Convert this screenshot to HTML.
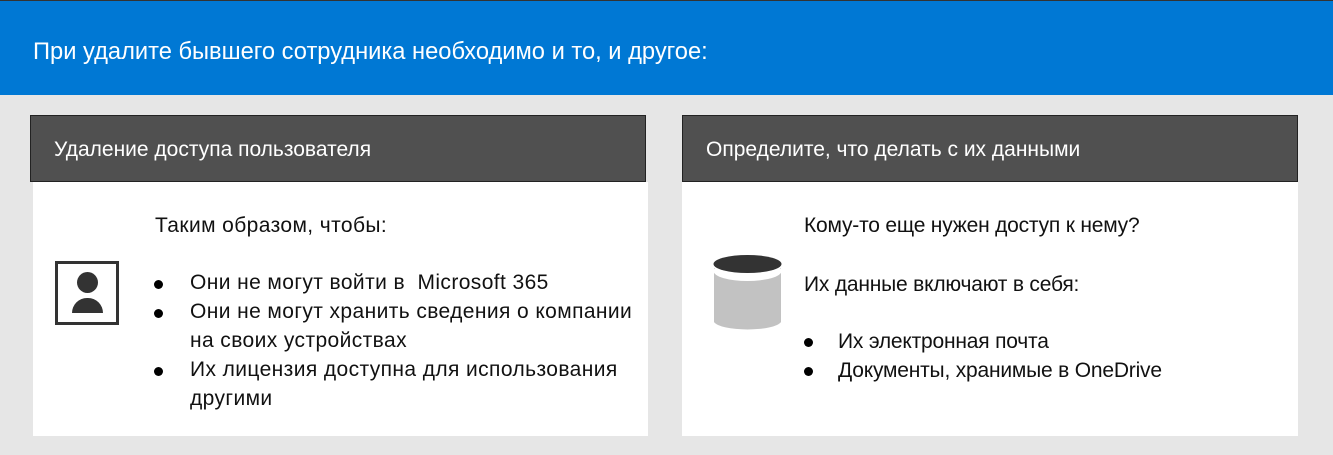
<!DOCTYPE html>
<html><head><meta charset="utf-8"><style>
*{margin:0;padding:0;box-sizing:border-box}
body{width:1333px;height:455px;background:#e6e6e6;font-family:"Liberation Sans",sans-serif;position:relative;overflow:hidden}
.top{position:absolute;left:0;top:0;width:1333px;height:95px;background:#0078d4;border-top:1px solid #333}
.t{position:absolute;white-space:nowrap}
.hd{position:absolute;top:115px;height:67px;background:#505050;border:1px solid #222;color:#fff;font-size:21px}
.bd{position:absolute;top:182px;height:254px;background:#fff}
.dot{position:absolute;width:9px;height:9px;border-radius:50%;background:#000}
.l{font-size:21px;color:#111;letter-spacing:0.4px}
.r{font-size:21px;color:#111;letter-spacing:-0.2px}
</style></head><body>
<div class="top"></div>
<div class="t" style="left:33px;top:39px;color:#fff;font-size:23.7px">При удалите бывшего сотрудника необходимо и то, и другое:</div>
<div class="hd" style="left:30px;width:616px"><div class="t" style="left:23px;top:22px">Удаление доступа пользователя</div></div>
<div class="bd" style="left:33px;width:615px"></div>
<div class="hd" style="left:682px;width:616px"><div class="t" style="left:23px;top:22px">Определите, что делать с их данными</div></div>
<div class="bd" style="left:682px;width:616px"></div>

<div style="position:absolute;left:55px;top:261px;width:64px;height:64px;border:3px solid #333"></div>
<div style="position:absolute;left:77px;top:272px;width:21px;height:21px;border-radius:50%;background:#333"></div>
<div style="position:absolute;left:72px;top:298px;width:31px;height:15px;border-radius:16px 16px 0 0;background:#333"></div>

<div class="t l" style="left:155px;top:214px">Таким образом, чтобы:</div>
<div class="dot" style="left:154px;top:280px"></div><div class="t l" style="left:190px;top:271px">Они не могут войти в&nbsp; Microsoft 365</div>
<div class="dot" style="left:154px;top:309px"></div><div class="t l" style="left:190px;top:300px">Они не могут хранить сведения о компании</div>
<div class="t l" style="left:190px;top:329px">на своих устройствах</div>
<div class="dot" style="left:154px;top:367px"></div><div class="t l" style="left:190px;top:358px">Их лицензия доступна для использования</div>
<div class="t l" style="left:190px;top:387px">другими</div>

<svg style="position:absolute;left:713px;top:254px" width="70" height="78"><path d="M1 14 V68 A34 9 0 0 0 68 68 V14 Z" fill="#c2c2c2"/><ellipse cx="34.5" cy="17" rx="34" ry="10" fill="#fff"/><ellipse cx="34.5" cy="10" rx="34" ry="9" fill="#333"/></svg>

<div class="t r" style="left:804px;top:214px">Кому-то еще нужен доступ к нему?</div>
<div class="t r" style="left:804px;top:273px">Их данные включают в себя:</div>
<div class="dot" style="left:804px;top:338px"></div><div class="t r" style="left:838px;top:330px">Их электронная почта</div>
<div class="dot" style="left:804px;top:367px"></div><div class="t r" style="left:838px;top:359px">Документы, хранимые в OneDrive</div>
</body></html>
